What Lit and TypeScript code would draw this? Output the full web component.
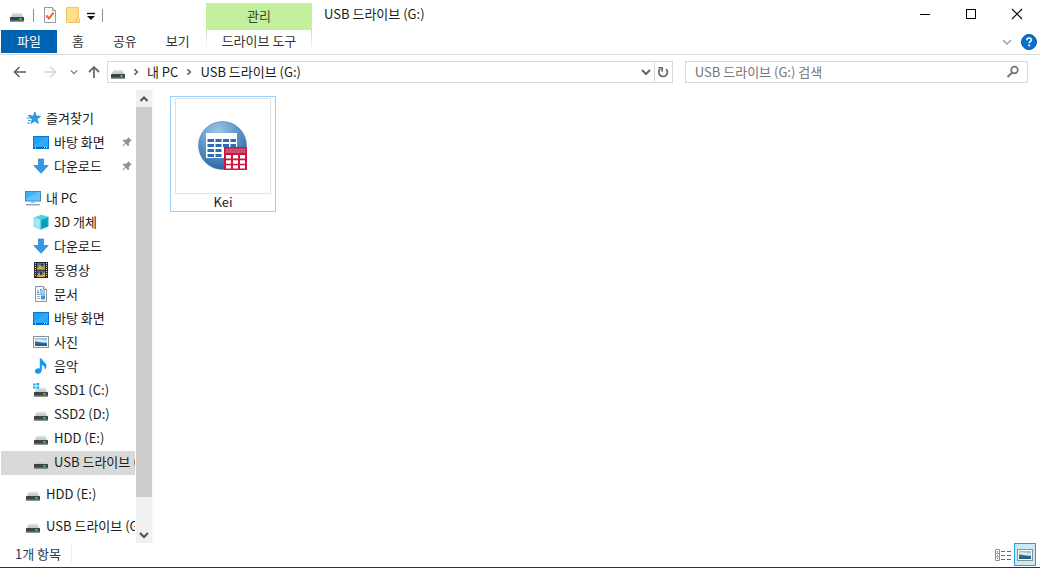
import { LitElement, html, svg, css, TemplateResult } from "lit";
import { customElement, property } from "lit/decorators.js";

type IconName =
  | "drive" | "system-drive" | "star" | "desktop" | "download" | "pc" | "cube"
  | "video" | "document" | "picture" | "music" | "pin" | "check-doc" | "folder"
  | "customize" | "back" | "forward" | "up" | "chevron-down" | "chevron-up" | "chevron-right"
  | "refresh" | "search" | "minimize" | "maximize" | "close" | "help" | "list-view" | "dataset";

const drive = svg`
  <path d="M3.500 6h9l2 5h-13z" fill="#c9cccf"/>
  <path d="M3.500 6h9l.6 1.500H2.900z" fill="#e0e2e4"/>
  <rect x="1" y="10" width="14" height="4.500" rx=".6" fill="#3f4245"/>
  <rect x="1" y="13.500" width="14" height="1" fill="#85888a"/>
  <rect x="10.500" y="11" width="2" height="2" fill="#2fe04a"/>`;

const icons: Record<IconName, TemplateResult> = {
  drive,
  "system-drive": svg`${drive}
    <rect x="0" y="1" width="6" height="6" fill="#fff"/>
    <path d="M0 1.400h2.600v2H0zM3.400 1h2.800v2.400H3.400zM0 4.400h2.600v2H0zM3.400 4.400h2.800v2.400H3.400z" fill="#19b1f0"/>`,
  star: svg`
    <path d="M9.800 2l1.500 4.100 4.200.2-3.300 2.800 1.200 4.400-3.600-2.400-3.700 2.400 1.200-4.300L4 6.400l4.300-.2z" fill="#2a9fe8" stroke="#1583cf" stroke-width=".7"/>
    <path d="M2.800 5.500h4M1.600 8h4M3 10.400h3M2.200 13h3" stroke="#2a9fe8" stroke-width="1"/>`,
  desktop: svg`
    <rect x=".5" y="2.500" width="15" height="12" fill="#1ea2fb" stroke="#0878cf"/>
    <path d="M1 11L14 3h1v9.500H1z" fill="#47b7ff" opacity=".45"/>
    <rect x="1" y="13" width="14" height="1" fill="#075fa9"/>
    <path d="M2 13.500h1M11 13.500h1M13 13.500h1" stroke="#d9f1ff"/>`,
  download: svg`<path d="M5.500 1h5v6.500h4.700L8 15.300.8 7.500h4.700z" fill="#3797e8" stroke="#2380cd" stroke-width=".7"/>`,
  pc: svg`
    <rect x=".5" y="1.500" width="15" height="9.500" fill="#3db2fb" stroke="#4c86ad"/>
    <path d="M1 9L13 2h2v8.500H1z" fill="#7dd0ff" opacity=".6"/>
    <path d="M6 11.500h4v1.500H6z" fill="#a7b9c7"/>
    <path d="M1 14.500h14" stroke="#8ea4b4"/><path d="M1 15.500h14" stroke="#d1d9df"/>`,
  cube: svg`
    <path d="M.5 3.500L8.500.8l7 2L7.500 5.500z" fill="#53d1df"/>
    <path d="M.5 3.500l7 2V15.800l-7-3z" fill="#8de3ed"/>
    <path d="M7.500 5.500l8-2.700v9.600l-8 3.400z" fill="#0bacc9"/>
    <path d="M2 5l4.500 1.500v7L2 11.500z" fill="#c4f3f7" opacity=".5"/>
    <path d="M9 8l5-2v5.500l-5 2z" fill="#078aab" opacity=".45"/>`,
  video: svg`
    <rect x="1" y="0" width="14" height="16" fill="#2b2b2f"/>
    <path d="M2.500 1v14M13.500 1v14" stroke="#cfcfd2" stroke-dasharray="1 1"/>
    <rect x="4" y="1" width="8" height="6.500" fill="#476fb9"/>
    <rect x="4" y="8.500" width="8" height="6.500" fill="#3c62a8"/>
    <path d="M4 6l3-3 2 2 3-2v4.500H4zM4 14l2-3 3 1 3-2v5H4z" fill="#e0a92c"/>
    <path d="M8 2h2v2H8zM7 10h2v3H7z" fill="#263a5c"/>
    <path d="M10 4h2v2h-2zM9 11h2v2H9z" fill="#61ad4a"/>`,
  document: svg`
    <path d="M2.500.5h8l3 3v12h-11z" fill="#fbfbfb" stroke="#8c9297"/>
    <path d="M10.500.5v3h3" fill="#e0e3e5" stroke="#8c9297"/>
    <path d="M4 8.500h8M4 10.500h3M4 12.500h3" stroke="#8ab7dc"/>
    <path d="M4 6.500h2M4.500 4.500h1" stroke="#3a93d9" stroke-width="1.400"/>
    <path d="M7 3.500h2M7 5h5M7 7h5" stroke="#3d9ae2"/>
    <rect x="8" y="9.500" width="4" height="4" fill="#4094d9"/>`,
  picture: svg`
    <rect x=".5" y="2.500" width="15" height="11" fill="#fdfdfd" stroke="#8c9196"/>
    <rect x="2" y="4" width="12" height="8" fill="#8fc6f2"/>
    <path d="M2 6c4-2 8 1 12 0v2H2z" fill="#dcecf8"/>
    <path d="M2 7.500c3-.5 5 1.500 12 1.500v3H2z" fill="#367766"/>
    <path d="M2 10.500c4-1 8-1 12 0V12H2z" fill="#24599b"/>`,
  music: svg`
    <path d="M6.200.5h1.900c.4 3 5 4 4.800 7.700-.1 1.800-.9 2.800-1.800 3.600.6-2.600-.3-4.100-2.900-4.800v5c0 2-1.600 3.700-3.800 3.700-1.800 0-3.100-1-3.100-2.500 0-1.800 2.100-3.100 4.900-2.800z" fill="#119af0" transform="translate(.6 0)"/>`,
  pin: svg`
    <path d="M8.500 1.500l4 4-1.300.4-2.100 2.300.2 2.800-1 .8-2.800-2.800L2.500 12l-.7-.6 3-3.300L2 5.300l.8-1 2.900.2L8 2.600z" transform="translate(1 1)" fill="#8995a0"/>`,
  "check-doc": svg`
    <path d="M2.500.5h8l3 3v12h-11z" fill="#fafafa" stroke="#979b9f"/>
    <path d="M10.500.5v3h3" fill="#e6e6e6" stroke="#979b9f"/>
    <path d="M4.300 8.500l2.700 3 4.600-6" fill="none" stroke="#ee632b" stroke-width="2"/>`,
  folder: svg`
    <path d="M1.500.5h12v10l1 1v4h-13z" fill="#ffe08a" stroke="#edc867"/>
    <path d="M11.500 15.500v-4l2-1" fill="#fff1bd" stroke="#e5bd55"/>`,
  customize: svg`<path d="M4 6.500h8" stroke="#111" stroke-width="1.400"/><path d="M4 9h8l-4 4z" fill="#111"/>`,
  back: svg`<path d="M14 8H2.500M7.500 3L2.500 8l5 5" fill="none" stroke="#5f5f5f" stroke-width="1.600"/>`,
  forward: svg`<path d="M2 8h11.500M8.500 3l5 5-5 5" fill="none" stroke="#d5d5d5" stroke-width="1.600"/>`,
  up: svg`<path d="M8 14V3M3 8l5-5 5 5" fill="none" stroke="#6b6b6b" stroke-width="1.800"/>`,
  "chevron-down": svg`<path d="M4 6l4 4 4-4" fill="none" stroke="currentColor" stroke-width="var(--stroke, 1.500)"/>`,
  "chevron-up": svg`<path d="M4.500 10L8 6.500l3.500 3.500" fill="none" stroke="currentColor" stroke-width="2"/>`,
  "chevron-right": svg`<path d="M6.500 5.200L9.300 8l-2.800 2.800" fill="none" stroke="#555" stroke-width="1.500"/>`,
  refresh: svg`
    <path d="M11.200 5.200A4.300 4.300 0 1 1 5.200 5" fill="none" stroke="#666" stroke-width="1.700"/>
    <path d="M3.400 3.800h3.800v4" fill="none" stroke="#666" stroke-width="1.600"/>`,
  search: svg`
    <circle cx="9.500" cy="6" r="3.300" fill="none" stroke="#767676" stroke-width="1.700"/>
    <path d="M7.200 8.500L2.500 13" stroke="#767676" stroke-width="2"/>`,
  minimize: svg`<path d="M3 8.500h10" stroke="#000"/>`,
  maximize: svg`<rect x="3.500" y="3.500" width="9" height="9" fill="none" stroke="#000"/>`,
  close: svg`<path d="M3 3l10 10M13 3L3 13" stroke="#000" stroke-width="1.100"/>`,
  help: svg`
    <circle cx="8" cy="8" r="7.500" fill="#0b6fd0" stroke="#0a57a5"/>
    <path d="M5.800 6.200c0-3 4.500-2.800 4.500-.3 0 1.600-2.100 1.700-2.100 3.300" fill="none" stroke="#fff" stroke-width="1.600"/>
    <rect x="7.300" y="10.500" width="1.800" height="1.800" fill="#fff"/>`,
  "list-view": svg`
    <path d="M.5 2.500h4v11h-4zM.5 6.200h4M.5 9.800h4" fill="#fff" stroke="#929292"/>
    <path d="M2 4.500h1M2 8h1M2 11.500h1" stroke="#4d7ea8"/>
    <path d="M6 4.500h4M12 4.500h4M6 8.500h4M12 8.500h4M6 12.500h4M12 12.500h4" stroke="#6c6c6c"/>`,
  dataset: svg`
    <defs><radialGradient id="ball" cx=".4" cy=".2" r=".85">
      <stop offset="0" stop-color="#9fc4e4"/><stop offset=".5" stop-color="#5c97c9"/><stop offset="1" stop-color="#24619f"/>
    </radialGradient></defs>
    <circle cx="24.500" cy="24.500" r="24" fill="url(#ball)" stroke="#4b7faf" stroke-width=".6"/>
    <rect x="8" y="12" width="31" height="25" fill="#fff"/>
    <path d="M9.500 19.500h6.500M17.500 19.500h6M25 19.500h6M32.500 19.500h5.500M9.500 24.500h6.500M17.500 24.500h6M25 24.500h6M32.500 24.500h5.500M9.500 29.500h6.500M17.500 29.500h6M9.500 34.500h6.500M17.500 34.500h6" stroke="#2e6cb8" stroke-width="3"/>
    <rect x="26" y="26" width="23" height="23" fill="#d01440"/>
    <rect x="27.500" y="27.500" width="20" height="4.500" fill="#c6536a"/>
    <path d="M28 34h5v3.500h-5zM35 34h5v3.500h-5zM42 34h5v3.500h-5zM28 39.200h5v3.500h-5zM35 39.200h5v3.500h-5zM42 39.200h5v3.500h-5zM28 44.300h5v3.200h-5zM35 44.300h5v3.200h-5zM42 44.300h5v3.200h-5z" fill="#fff"/>`,
};

@customElement("ui-icon")
class UiIcon extends LitElement {
  @property() name: IconName = "drive";
  @property() box = "0 0 16 16";
  static styles = css`
    :host { display: block; flex: none; width: 16px; height: 16px; }
    svg { display: block; width: 100%; height: 100%; }
  `;
  render() {
    return html`<svg viewBox=${this.box} aria-hidden="true">${icons[this.name]}</svg>`;
  }
}

interface NavItem {
  icon: IconName;
  label: string;
  pinned?: boolean;
  selected?: boolean;
}
interface NavGroup {
  head: NavItem;
  items: NavItem[];
}

const groups: NavGroup[] = [
  {
    head: { icon: "star", label: "즐겨찾기" },
    items: [
      { icon: "desktop", label: "바탕 화면", pinned: true },
      { icon: "download", label: "다운로드", pinned: true },
    ],
  },
  {
    head: { icon: "pc", label: "내 PC" },
    items: [
      { icon: "cube", label: "3D 개체" },
      { icon: "download", label: "다운로드" },
      { icon: "video", label: "동영상" },
      { icon: "document", label: "문서" },
      { icon: "desktop", label: "바탕 화면" },
      { icon: "picture", label: "사진" },
      { icon: "music", label: "음악" },
      { icon: "system-drive", label: "SSD1 (C:)" },
      { icon: "drive", label: "SSD2 (D:)" },
      { icon: "drive", label: "HDD (E:)" },
      { icon: "drive", label: "USB 드라이브 (G:)", selected: true },
    ],
  },
  { head: { icon: "drive", label: "HDD (E:)" }, items: [] },
  { head: { icon: "drive", label: "USB 드라이브 (G:)" }, items: [] },
];

@customElement("app-root")
class AppRoot extends LitElement {
  static styles = css`
    :host {
      display: flex;
      flex-direction: column;
      box-sizing: border-box;
      height: 100vh;
      border-bottom: 1px solid #26343b;
      background: #fff;
      color: #1b1b1b;
      font: 13px/20px "Noto Sans CJK KR", sans-serif;
    }
    * { box-sizing: border-box; }
    button, input {
      margin: 0;
      padding: 0;
      border: 0;
      background: none;
      color: inherit;
      font: inherit;
    }
    button { display: flex; align-items: center; justify-content: center; white-space: nowrap; }
    a { color: inherit; text-decoration: none; white-space: nowrap; }
    ul { margin: 0; padding: 0; list-style: none; }

    .header {
      display: grid;
      grid-template: 30px 24px / 206px 106px 1fr auto;
      flex: none;
      border-bottom: 1px solid #dadbdc;
    }
    .quick { display: flex; align-items: center; gap: 8px; padding-left: 9px; }
    .quick .line { width: 1px; height: 13px; background: #8c8c8c; }
    .quick button { margin-right: -1px; }
    .quick .more { margin: 0 -5px; }
    .context { display: flex; align-items: center; justify-content: center; margin-top: 3px; padding-bottom: 2px; background: #c3f09c; color: #3a4a30; }
    .title { padding: 4px 12px; white-space: nowrap; }
    .controls { display: flex; }
    .controls button { width: 46px; height: 28px; }
    .tabs { display: flex; gap: 1px; padding-left: 1px; color: #333; }
    .tabs button { height: 23px; padding: 0 14px 2px; }
    .tabs .file { padding: 0 16px 2px; background: #0063b1; color: #fff; }
    .tool { height: 19px; border: solid; border-width: 0 1px; border-image: linear-gradient(#ccc, #fff) 1; }
    .tool, .tool button { width: 100%; }
    .tool button { height: 23px; padding-bottom: 2px; color: #333; }
    .help { display: flex; grid-column: 3 / 5; align-items: center; justify-content: flex-end; gap: 6px; padding-right: 3px; color: #a0a0a0; }

    .bar { display: flex; flex: none; align-items: center; padding: 6px 12px 7px; }
    .arrows { display: flex; flex: none; align-items: center; width: 95px; gap: 14px; color: #777; }
    .arrows .recent { margin: 0 -10px 0 -6px; }
    .address { display: flex; flex: 1; min-width: 0; height: 22px; border: 1px solid #d9d9d9; color: #666; --stroke: 2; }
    .crumbs { display: flex; flex: 1; align-items: center; gap: 2px; padding-left: 2px; overflow: hidden; color: #1b1b1b; }
    .crumbs button { padding: 0 1px; }
    .address .refresh { width: 18px; border-left: 1px solid #d9d9d9; }
    .search { display: flex; flex: none; align-items: center; width: 33vw; height: 22px; margin-left: 12px; padding: 0 6px 0 9px; border: 1px solid #d9d9d9; }
    .search input { flex: 1; min-width: 0; height: 20px; outline: 0; }
    .search input::placeholder { color: #767676; opacity: 1; }

    .main { display: flex; flex: 1; min-height: 0; }
    .nav { flex: none; width: 136px; padding: 17px 1px 0; overflow: hidden; }
    .group + .group { margin-top: 8px; }
    .row { display: flex; align-items: center; gap: 5px; height: 24px; padding: 0 0 2px 24px; overflow: hidden; }
    .row.child { padding-left: 32px; }
    .row.selected { background: #d9d9d9; }
    .row .pin { width: 14px; height: 14px; margin: 0 1px 0 auto; }
    .scroll { display: flex; flex: none; flex-direction: column; width: 16px; background: #f0f0f0; color: #505050; --stroke: 2; }
    .scroll button { height: 17px; }
    .track { flex: 1; }
    .thumb { height: 93%; background: #cdcdcd; }

    .files { flex: 1; padding: 6px 16px; border-left: 2px solid #fafafa; }
    .tile { display: flex; flex-direction: column; align-items: center; width: 106px; height: 116px; padding-top: 1px; border: 1px solid #99d1ff; }
    .thumbnail { display: flex; align-items: center; justify-content: center; width: 96px; height: 96px; border: 1px solid #e3e3e3; border-radius: 1px; box-shadow: 0 0 1px #ddd; }
    .thumbnail ui-icon { width: 50px; height: 50px; }
    .tile span { line-height: 16px; }

    .status { display: flex; flex: none; align-items: center; height: 24px; padding: 0 4px 1px 15px; color: #1e395b; }
    .status .count { flex: 1; padding-bottom: 2px; }
    .count span { padding-right: 10px; border-right: 1px solid #f0f0f0; }
    .status button { width: 22px; height: 23px; }
    .status .on { border: 1px solid #26a0da; background: #cbe8f6; }
  `;

  private row(item: NavItem, child: boolean) {
    return html`<li><a href="#" class="row ${child ? "child" : ""} ${item.selected ? "selected" : ""}">
      <ui-icon name=${item.icon}></ui-icon><span>${item.label}</span>
      ${item.pinned ? html`<ui-icon class="pin" name="pin"></ui-icon>` : ""}
    </a></li>`;
  }

  render() {
    return html`
      <header class="header">
        <div class="quick">
          <ui-icon name="drive"></ui-icon>
          <span class="line"></span>
          <button aria-label="속성"><ui-icon name="check-doc"></ui-icon></button>
          <button aria-label="새 폴더"><ui-icon name="folder"></ui-icon></button>
          <button class="more" aria-label="빠른 실행 도구 모음 사용자 지정"><ui-icon name="customize"></ui-icon></button>
          <span class="line"></span>
        </div>
        <div class="context">관리</div>
        <div class="title">USB 드라이브 (G:)</div>
        <div class="controls">
          <button aria-label="최소화"><ui-icon name="minimize"></ui-icon></button>
          <button aria-label="최대화"><ui-icon name="maximize"></ui-icon></button>
          <button aria-label="닫기"><ui-icon name="close"></ui-icon></button>
        </div>
        <nav class="tabs">
          <button class="file">파일</button><button>홈</button><button>공유</button><button>보기</button>
        </nav>
        <div class="tool"><button>드라이브 도구</button></div>
        <div class="help">
          <button aria-label="리본 확장"><ui-icon name="chevron-down"></ui-icon></button>
          <button aria-label="도움말"><ui-icon name="help"></ui-icon></button>
        </div>
      </header>

      <div class="bar">
        <div class="arrows">
          <button aria-label="뒤로"><ui-icon name="back"></ui-icon></button>
          <button aria-label="앞으로"><ui-icon name="forward"></ui-icon></button>
          <button class="recent" aria-label="최근 위치"><ui-icon name="chevron-down" box="-2 -2 20 20"></ui-icon></button>
          <button aria-label="위로"><ui-icon name="up"></ui-icon></button>
        </div>
        <div class="address">
          <div class="crumbs">
            <ui-icon name="drive"></ui-icon>
            <ui-icon name="chevron-right"></ui-icon>
            <button>내 PC</button>
            <ui-icon name="chevron-right"></ui-icon>
            <button>USB 드라이브 (G:)</button>
          </div>
          <button aria-label="이전 위치"><ui-icon name="chevron-down"></ui-icon></button>
          <button class="refresh" aria-label="새로 고침"><ui-icon name="refresh"></ui-icon></button>
        </div>
        <div class="search">
          <input type="text" aria-label="검색" placeholder="USB 드라이브 (G:) 검색" />
          <button aria-label="찾기"><ui-icon name="search"></ui-icon></button>
        </div>
      </div>

      <div class="main">
        <nav class="nav" aria-label="탐색 창">
          ${groups.map((g) => html`<ul class="group">
            ${this.row(g.head, false)}${g.items.map((i) => this.row(i, true))}
          </ul>`)}
        </nav>
        <div class="scroll">
          <button aria-label="위로 스크롤"><ui-icon name="chevron-up"></ui-icon></button>
          <div class="track"><div class="thumb"></div></div>
          <button aria-label="아래로 스크롤"><ui-icon name="chevron-down"></ui-icon></button>
        </div>
        <main class="files">
          <a href="#" class="tile">
            <div class="thumbnail"><ui-icon name="dataset" box="0 0 50 50"></ui-icon></div>
            <span>Kei</span>
          </a>
        </main>
      </div>

      <footer class="status">
        <div class="count"><span>1개 항목</span></div>
        <button aria-label="자세히"><ui-icon name="list-view"></ui-icon></button>
        <button class="on" aria-label="큰 아이콘"><ui-icon name="picture"></ui-icon></button>
      </footer>
    `;
  }
}
